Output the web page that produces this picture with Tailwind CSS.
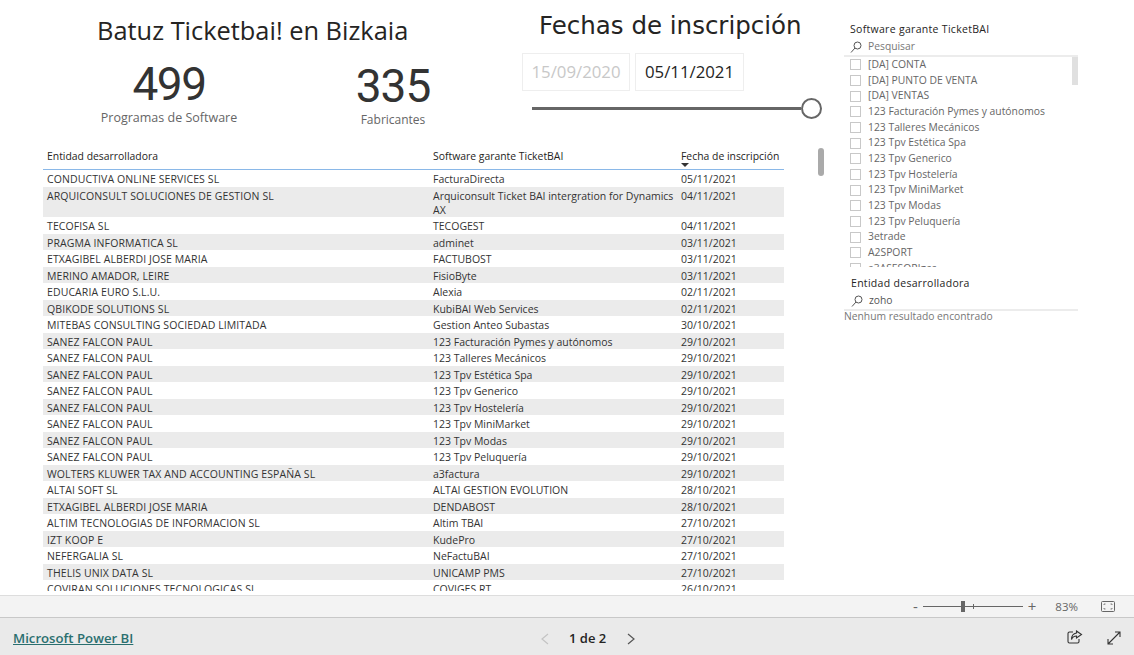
<!DOCTYPE html>
<html lang="en">
<head>
    <meta charset="UTF-8">
    <title>Batuz Ticketbai! en Bizkaia</title>
    <script src="https://cdn.jsdelivr.net/npm/@tailwindcss/browser@4"></script>
</head>
<body class="bg-white h-screen overflow-hidden flex flex-col font-['Open_Sans',sans-serif] text-[#333]">
    <!-- Report page -->
    <main class="h-[595px] overflow-hidden flex">
        <!-- Left side -->
        <div class="w-[835px] shrink-0 flex flex-col">
            <div class="h-[148px] flex">
                <!-- Title and cards -->
                <div class="w-[505px] shrink-0">
                    <h1 class="pt-[13px] pl-[97px] text-[25.4px] leading-[34px] text-[#252423]">Batuz Ticketbai! en Bizkaia</h1>
                    <div class="flex mt-[12px]">
                        <div class="w-[338px] text-center">
                            <div class="font-['Roboto',sans-serif] text-[46px] leading-[50px] tracking-[-1.5px] text-[#333]">499</div>
                            <div class="text-[12.5px] leading-[18px] text-[#666]">Programas de Software</div>
                        </div>
                        <div class="w-[110px] text-center">
                            <div class="mt-[2px] font-['Roboto',sans-serif] text-[46px] leading-[50px] tracking-[-1px] text-[#333]">335</div>
                            <div class="text-[12px] leading-[18px] text-[#666]">Fabricantes</div>
                        </div>
                    </div>
                </div>
                <!-- Date slicer -->
                <div class="w-[330px] pl-[17px]">
                    <h2 class="pt-[9px] pl-[17px] font-['DejaVu_Sans',sans-serif] text-[24.5px] leading-[34px] text-[#252423]">Fechas de inscripción</h2>
                    <div class="flex gap-[5px] mt-[10px]">
                        <div class="w-[108px] h-[38px] border border-[#eee] flex items-center justify-center text-[16.8px] text-[#c8c8c8]">15/09/2020</div>
                        <div class="w-[109px] h-[38px] border border-[#eee] flex items-center justify-center text-[16.8px] text-[#252423]">05/11/2021</div>
                    </div>
                    <div class="flex items-center mt-[7px] ml-[10px] w-[290px]">
                        <div class="flex-1 h-[3px] bg-[#666]"></div>
                        <div class="w-[21px] h-[21px] rounded-full border-2 border-[#666] bg-white"></div>
                    </div>
                </div>
            </div>
            <!-- Table -->
            <div class="flex-1 min-h-0 flex pl-[43px]">
                <div class="w-[741px] text-[10.5px]">
                    <div class="grid grid-cols-[386px_248px_107px] h-[22px] border-b border-[#8ab8e8] text-[#252423] text-[10.4px]">
                        <div class="pl-[4px] pt-[1px] leading-[14px]">Entidad desarrolladora</div>
                        <div class="pl-[4px] pt-[1px] leading-[14px]">Software garante TicketBAI</div>
                        <div class="pl-[4px] pt-[1px] leading-[14px] relative">Fecha de inscripción
                            <svg class="absolute left-[4px] top-[15px]" width="8" height="4" viewBox="0 0 8 4"><path d="M0 0h8L4 4z" fill="#333"/></svg>
                        </div>
                    </div>
                    <div id="rows" class="h-[421px] overflow-hidden"></div>
                </div>
                <div class="ml-[34px] w-[6px] h-[28px] rounded-[3px] bg-[#aaa]"></div>
            </div>
        </div>
        <!-- Right side slicers -->
        <aside class="flex-1 pl-[9px] pr-[56px]">
            <div class="h-[267px] overflow-hidden pt-[21px]">
                <div class="pl-[6px] text-[10.5px] leading-[16px] font-medium text-[#252423] tracking-[0.3px]">Software garante TicketBAI</div>
                <div class="flex items-center gap-[6px] h-[18px] pt-[1px] pl-[6px] text-[10.3px] text-[#777]">
                    <svg width="12" height="12" viewBox="0 0 12 12" fill="none" stroke="#555" stroke-width="1"><circle cx="7.5" cy="4.5" r="3.5"/><path d="M5 7L1 11.5"/></svg>
                    Pesquisar
                </div>
                <div class="relative border-t-2 border-[#ececec]">
                    <div id="options"></div>
                    <div class="absolute right-0 top-0 w-[6px] h-[28px] bg-[#e0e0e0]"></div>
                </div>
            </div>
            <div class="pt-[8px]">
                <div class="pl-[7px] text-[10.5px] leading-[16px] font-medium text-[#252423] tracking-[0.3px]">Entidad desarrolladora</div>
                <div class="flex items-center gap-[6px] h-[18px] pt-[1px] pl-[7px] text-[10.3px] text-[#555]">
                    <svg width="12" height="12" viewBox="0 0 12 12" fill="none" stroke="#555" stroke-width="1"><circle cx="7.5" cy="4.5" r="3.5"/><path d="M5 7L1 11.5"/></svg>
                    zoho
                </div>
                <div class="border-t-2 border-[#ececec] text-[10.3px] leading-[11px] text-[#777]">Nenhum resultado encontrado</div>
            </div>
        </aside>
    </main>

    <!-- Zoom bar -->
    <div class="h-[22px] bg-[#f3f3f3] border-t border-[#ddd] flex items-center justify-end text-[#666]">
        <span class="text-[15px] leading-none">-</span>
        <div class="relative w-[100px] h-px bg-[#666] mx-[5px]">
            <div class="absolute left-[38px] -top-[5px] w-[4px] h-[11px] bg-[#666]"></div>
            <div class="absolute left-[50px] -top-[2px] w-px h-[5px] bg-[#666]"></div>
        </div>
        <span class="text-[15px] leading-none">+</span>
        <span class="ml-[19px] text-[11.5px]">83%</span>
        <svg class="ml-[23px] mr-[19px]" width="14" height="11" viewBox="0 0 14 11" fill="none" stroke="#666"><rect x="0.5" y="0.5" width="13" height="10" rx="1"/><path d="M3 4V3h1.5M9.5 3H11v1M11 7v1H9.5M4.5 8H3V7" stroke-width="0.8"/></svg>
    </div>

    <!-- Footer -->
    <footer class="flex-1 bg-[#eaeaea] border-t border-[#c8c8c8] flex items-center relative pt-[5px]">
        <a class="ml-[13px] text-[13.2px] font-semibold text-[#2a6f6f] underline">Microsoft Power BI</a>
        <div class="absolute left-[540px] top-[2px] h-full flex items-center">
            <svg width="10" height="12" viewBox="0 0 10 12" fill="none" stroke="#c4c4c4" stroke-width="1.2"><path d="M8 1L2 6l6 5"/></svg>
            <span class="ml-[19px] text-[13px] font-semibold text-[#252423]">1 de 2</span>
            <svg class="ml-[20px]" width="10" height="12" viewBox="0 0 10 12" fill="none" stroke="#555" stroke-width="1.2"><path d="M2 1l6 5-6 5"/></svg>
        </div>
        <svg class="absolute left-[1067px] top-[12px]" width="16" height="15" viewBox="0 0 16 15" fill="none" stroke="#333" stroke-width="1.1"><path d="M6 2H2.5A1.5 1.5 0 0 0 1 3.5v8A1.5 1.5 0 0 0 2.5 13h8a1.5 1.5 0 0 0 1.5-1.5V9"/><path d="M9.5 1l5 3.5-5 3.5V6C7 6 5.5 7 4.5 9.5 4.5 6 6.5 3.5 9.5 3z"/></svg>
        <svg class="absolute left-[1107px] top-[13px]" width="14" height="14" viewBox="0 0 14 14" fill="none" stroke="#333" stroke-width="1.1"><path d="M8 1h5v5M13 1L1 13M1 8v5h5"/></svg>
    </footer>

    <script>
        // Table rows: [entity, software, date]
        const rows = [
            ['CONDUCTIVA ONLINE SERVICES SL', 'FacturaDirecta', '05/11/2021'],
            ['ARQUICONSULT SOLUCIONES DE GESTION SL', 'Arquiconsult Ticket BAI intergration for Dynamics AX', '04/11/2021'],
            ['TECOFISA SL', 'TECOGEST', '04/11/2021'],
            ['PRAGMA INFORMATICA SL', 'adminet', '03/11/2021'],
            ['ETXAGIBEL ALBERDI JOSE MARIA', 'FACTUBOST', '03/11/2021'],
            ['MERINO AMADOR, LEIRE', 'FisioByte', '03/11/2021'],
            ['EDUCARIA EURO S.L.U.', 'Alexia', '02/11/2021'],
            ['QBIKODE SOLUTIONS SL', 'KubiBAI Web Services', '02/11/2021'],
            ['MITEBAS CONSULTING SOCIEDAD LIMITADA', 'Gestion Anteo Subastas', '30/10/2021'],
            ['SANEZ FALCON PAUL', '123 Facturación Pymes y autónomos', '29/10/2021'],
            ['SANEZ FALCON PAUL', '123 Talleres Mecánicos', '29/10/2021'],
            ['SANEZ FALCON PAUL', '123 Tpv Estética Spa', '29/10/2021'],
            ['SANEZ FALCON PAUL', '123 Tpv Generico', '29/10/2021'],
            ['SANEZ FALCON PAUL', '123 Tpv Hostelería', '29/10/2021'],
            ['SANEZ FALCON PAUL', '123 Tpv MiniMarket', '29/10/2021'],
            ['SANEZ FALCON PAUL', '123 Tpv Modas', '29/10/2021'],
            ['SANEZ FALCON PAUL', '123 Tpv Peluquería', '29/10/2021'],
            ['WOLTERS KLUWER TAX AND ACCOUNTING ESPAÑA SL', 'a3factura', '29/10/2021'],
            ['ALTAI SOFT SL', 'ALTAI GESTION EVOLUTION', '28/10/2021'],
            ['ETXAGIBEL ALBERDI JOSE MARIA', 'DENDABOST', '28/10/2021'],
            ['ALTIM TECNOLOGIAS DE INFORMACION SL', 'Altim TBAI', '27/10/2021'],
            ['IZT KOOP E', 'KudePro', '27/10/2021'],
            ['NEFERGALIA SL', 'NeFactuBAI', '27/10/2021'],
            ['THELIS UNIX DATA SL', 'UNICAMP PMS', '27/10/2021'],
            ['COVIRAN SOLUCIONES TECNOLOGICAS SL', 'COVIGES RT', '26/10/2021']
        ];

        document.getElementById('rows').innerHTML = rows.map((r, i) => `
            <div class="grid grid-cols-[386px_248px_107px] leading-[14px] pt-[2px] pb-[0.5px] ${i % 2 ? 'bg-[#ebebeb]' : 'bg-white'} text-[#333]">
                <div class="pl-[4px] tracking-[0.1px]">${r[0]}</div>
                <div class="pl-[4px]">${r[1]}</div>
                <div class="pl-[4px]">${r[2]}</div>
            </div>`).join('');

        const options = ['[DA] CONTA', '[DA] PUNTO DE VENTA', '[DA] VENTAS', '123 Facturación Pymes y autónomos', '123 Talleres Mecánicos', '123 Tpv Estética Spa', '123 Tpv Generico', '123 Tpv Hostelería', '123 Tpv MiniMarket', '123 Tpv Modas', '123 Tpv Peluquería', '3etrade', 'A2SPORT', 'a3ASESORlges'];

        document.getElementById('options').innerHTML = options.map(o => `
            <div class="flex items-center h-[15.67px] pl-[6px] text-[10.35px] text-[#666]">
                <span class="w-[11px] h-[11px] border border-[#c8c8c8] mr-[7px] shrink-0"></span>${o}
            </div>`).join('');
    </script>
</body>
</html>
